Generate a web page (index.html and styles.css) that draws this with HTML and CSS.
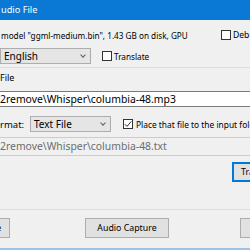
FILE: index.html
```html
<!DOCTYPE html>
<html>
<head>
<meta charset="utf-8">
<link rel="stylesheet" href="styles.css">
</head>
<body>
<div class="window">
  <div class="titlebar">udio File</div>
  <div class="content">
    <div class="row row-model">
      <span class="label">model "ggml-medium.bin", 1.43 GB on disk, GPU</span>
      <label class="check check-debug"><span class="box"></span><span>Debug</span></label>
    </div>
    <div class="row row-lang">
      <div class="combo combo-lang"><span>English</span><span class="chev"></span></div>
      <label class="check"><span class="box"></span><span>Translate</span></label>
    </div>
    <div class="group">
      <div class="group-label">File</div>
      <div class="textbox">2remove\Whisper\columbia-48.mp3</div>
      <div class="row row-format">
        <span class="label fmt-label">rmat:</span>
        <div class="combo combo-format"><span>Text File</span><span class="chev"></span></div>
        <label class="check check-place"><span class="box checked"><svg viewBox="0 0 10 10" width="8" height="8"><path d="M1 5.2 L3.8 8 L9 1.8" fill="none" stroke="#222" stroke-width="1.2"/></svg></span><span>Place that file to the input folder</span></label>
      </div>
      <div class="textbox disabled">2remove\Whisper\columbia-48.txt</div>
      <div class="row row-action">
        <button class="btn btn-default">Transcribe</button>
      </div>
    </div>
    <div class="row row-bottom">
      <button class="btn btn-left">Close</button>
      <button class="btn btn-mid">Audio Capture</button>
      <button class="btn btn-right">Help</button>
    </div>
  </div>
</div>
</body>
</html>
```

FILE: styles.css
```css
html, body {
  margin: 0;
  padding: 0;
  width: 250px;
  height: 250px;
  overflow: hidden;
  background: #f0f0f0;
}
body {
  font-family: "Noto Sans", "Open Sans", sans-serif;
  font-size: 8.2px;
  color: #000;
}
.window {
  width: 250px;
  height: 250px;
  display: flex;
  flex-direction: column;
  border-bottom: 2px solid #9fc3e6;
  box-sizing: border-box;
  overflow: hidden;
}
.titlebar {
  height: 20px;
  background: #0a78d5;
  color: #fff;
  font-size: 9.2px;
  line-height: 20px;
  padding-left: 1px;
  flex: none;
}
.content {
  display: flex;
  flex-direction: column;
  flex: 1;
}
.row {
  display: flex;
  align-items: center;
  white-space: nowrap;
}
.row-model {
  margin-top: 8px;
  height: 14px;
}
.row-model .label {
  padding-left: 1px;
}
.check {
  display: flex;
  align-items: center;
  gap: 2px;
}
.check-debug {
  margin-left: auto;
  width: 29px;
  overflow: hidden;
  font-size: 8.6px;
}
.box {
  width: 8px;
  height: 8px;
  border: 1px solid #333;
  background: #fff;
  flex: none;
  display: flex;
  align-items: center;
  justify-content: center;
}
.row-lang {
  margin-top: 6px;
  height: 16px;
}
.combo {
  height: 14px;
  border: 1px solid #adadad;
  background: #e5e5e5;
  display: flex;
  align-items: center;
  justify-content: space-between;
  padding: 0 5px 0 3px;
  box-sizing: content-box;
  font-size: 10px;
  flex: none;
}
.combo-lang {
  width: 81px;
  margin-right: 11px;
}
.chev {
  width: 3px;
  height: 3px;
  border-right: 1px solid #606060;
  border-bottom: 1px solid #606060;
  transform: rotate(45deg);
  margin-top: -3px;
}
.group {
  border-top: 1px solid #dcdcdc;
  border-bottom: 1px solid #dcdcdc;
  margin-top: 3px;
  height: 141px;
  display: flex;
  flex-direction: column;
  flex: none;
}
.group-label {
  margin-top: 3px;
  height: 14px;
  line-height: 14px;
  font-size: 9px;
}
.textbox {
  margin-top: 6px;
  height: 14px;
  line-height: 14px;
  border: 1px solid #7a7a7a;
  border-left: none;
  border-right: none;
  background: #fff;
  white-space: nowrap;
  font-size: 10.4px;
  flex: none;
}
.textbox.disabled {
  margin-top: 5px;
  height: 17px;
  line-height: 17px;
  color: #6d6d6d;
  background: #f0f0f0;
  border-color: #cccccc;
}
.row-format {
  margin-top: 9px;
  height: 16px;
}
.fmt-label {
  width: 30px;
  font-size: 9.5px;
  flex: none;
}
.combo-format {
  width: 71px;
  margin-right: 12px;
}
.check-place {
  font-size: 8.4px;
  gap: 3px;
}
.row-action {
  margin-top: 6px;
  justify-content: flex-end;
}
.btn {
  font: inherit;
  font-size: 8.8px;
  height: 20px;
  padding: 0;
  background: #e1e1e1;
  border: 1px solid #adadad;
  color: #000;
  white-space: nowrap;
  overflow: hidden;
  flex: none;
}
.btn-default {
  width: 70px;
  margin-right: -52px;
  border: 2px solid #0078d7;
  text-align: left;
  padding-left: 7px;
}
.row-bottom {
  margin-top: 8px;
  height: 20px;
}
.btn-left {
  width: 40px;
  margin-left: -30px;
}
.btn-mid {
  width: 84px;
  margin-left: 75px;
}
.btn-right {
  width: 60px;
  margin-left: 71px;
}
```
